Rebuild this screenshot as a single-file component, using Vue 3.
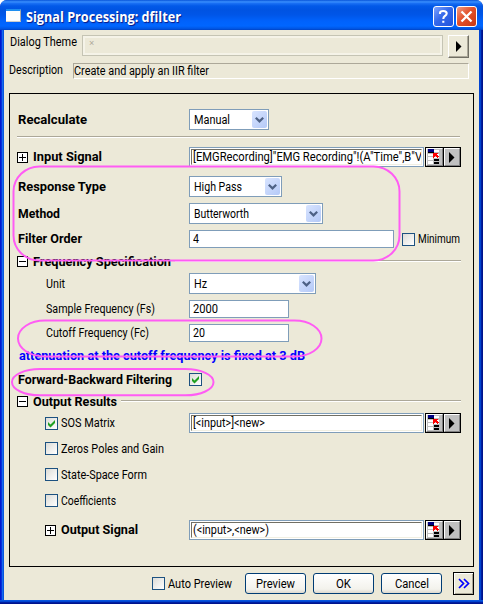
<script setup>
import { h } from 'vue'

// Condenses or widens a piece of text to the width the dialog font gives it.
const vFit = {
  mounted(el, { value }) {
    const natural = el.getBoundingClientRect().width
    el.style.transform = `scaleX(${value / natural})`
    el.style.marginRight = `${value - natural}px`
  },
}

const Arrow = () => h('svg', { width: 6, height: 11, viewBox: '0 0 6 11', class: 'arrow' }, [h('path', { d: 'M0 0v11l5.5-5.5z', fill: '#000' })])
const Chevron = () =>
  h('span', { class: 'drop' }, [
    h('svg', { width: 9, height: 6, viewBox: '0 0 9 6' }, [
      h('path', { d: 'M0.8 0.8L4.5 4.4L8.2 0.8', fill: 'none', stroke: '#4d6185', 'stroke-width': 2.2 }),
    ]),
  ])
const Box = (p) =>
  h('span', { class: 'check' }, p.on
    ? [h('svg', { width: 9, height: 9, viewBox: '0 0 9 9' }, [h('path', { d: 'M1 3v3l2.5 2.5L8 4V1L3.5 5.5z', fill: '#21a121' })])]
    : [])
Box.props = ['on']
const Toggle = (p) =>
  h('svg', { class: 'toggle', width: 11, height: 11, viewBox: '0 0 11 11', 'shape-rendering': 'crispEdges' }, [
    h('rect', { x: 0.5, y: 0.5, width: 10, height: 10, fill: '#fff', stroke: '#000' }),
    h('path', { d: p.open ? 'M2 5.5h7' : 'M2 5.5h7M5.5 2v7', stroke: '#000' }),
  ])
Toggle.props = ['open']
const Pickers = () =>
  h('span', { class: 'pickers' }, [
    h('span', { class: 'picker' }, [
      h('svg', { width: 13, height: 16, viewBox: '0 0 13 16', 'shape-rendering': 'crispEdges' }, [
        h('path', { d: 'M0 0h13v16H0z', fill: '#c0c0c0' }),
        h('path', { d: 'M6 1h5v2H6zM0 5h5v2H0zM6 5h5v2H6zM0 8h5v3H0zM6 8h5v1H6zM0 12h5v3H0z', fill: '#fff' }),
        h('path', { d: 'M0 0h6v3H0z', fill: '#000080' }),
        h('path', { d: 'M0 3h6v1H0zM6 10h5v2H6zM6 13h5v2H6z', fill: '#000' }),
        h('path', { d: 'M5 4h5v1H9v1h1v1h1v1h-1v1H9V8H8V7H7v1H6v1H5z', fill: '#f00' }),
      ]),
    ]),
    h('span', { class: 'picker' }, [h(Arrow)]),
  ])

const outputs = [
  { text: 'Zeros Poles and Gain', width: 103 },
  { text: 'State-Space Form', width: 86 },
  { text: 'Coefficients', width: 55 },
]
</script>

<template>
  <div class="window">
    <header class="title">
      <span class="app-icon"></span>
      <h1><span v-fit="155">Signal Processing: dfilter</span></h1>
      <span class="cap help"><svg width="19" height="19" viewBox="0 0 19 19"><path d="M6 7V5.8Q6.2 4 9.2 4Q12.7 4 12.7 6.6Q12.7 8 10.9 9Q9.3 10 9.3 12M9.3 13.7v2" fill="none" stroke="#fff" stroke-width="2.1" /></svg></span>
      <span class="cap close"><svg width="19" height="19" viewBox="0 0 19 19"><path d="M4.5 4.5l10 10M14.5 4.5l-10 10" fill="none" stroke="#fff" stroke-width="2.3" /></svg></span>
    </header>

    <main class="body">
      <div class="theme">
        <span class="top-label"><span v-fit="67">Dialog Theme</span></span>
        <div class="theme-field"><i>×</i></div>
        <button class="raised"><Arrow /></button>
      </div>
      <div class="desc">
        <span class="desc-label"><span v-fit="54">Description</span></span>
        <div class="desc-field"><span v-fit="135">Create and apply an IIR filter</span></div>
      </div>

      <section class="panel">
        <div class="row recalc">
          <b class="label"><span v-fit="69">Recalculate</span></b>
          <div class="select w80"><span v-fit="36">Manual</span><Chevron /></div>
        </div>
        <div class="rule"></div>
        <div class="row input-signal">
          <b class="label"><Toggle /><span v-fit="69">Input Signal</span></b>
          <div class="range"><div class="sunk"><span v-fit="229">[EMGRecording]"EMG Recording"!(A"Time",B"V</span></div></div>
          <Pickers />
        </div>
        <div class="row response">
          <b class="label"><span v-fit="88">Response Type</span></b>
          <div class="select w93"><span v-fit="48">High Pass</span><Chevron /></div>
        </div>
        <div class="row method">
          <b class="label"><span v-fit="42">Method</span></b>
          <div class="select w134"><span v-fit="55">Butterworth</span><Chevron /></div>
        </div>
        <div class="row order">
          <b class="label"><span v-fit="64">Filter Order</span></b>
          <div class="text w205"><span v-fit="6">4</span></div>
          <label class="minimum"><Box /><span v-fit="42">Minimum</span></label>
        </div>
        <div class="group freq">
          <Toggle :open="true" /><b><span v-fit="138">Frequency Specification</span></b><div class="rule"></div>
        </div>
        <div class="row unit">
          <span class="label sub"><span v-fit="19">Unit</span></span>
          <div class="select w127"><span v-fit="13">Hz</span><Chevron /></div>
        </div>
        <div class="row sample">
          <span class="label sub"><span v-fit="109">Sample Frequency (Fs)</span></span>
          <div class="text w100"><span v-fit="25">2000</span></div>
        </div>
        <div class="row cutoff">
          <span class="label sub"><span v-fit="103">Cutoff Frequency (Fc)</span></span>
          <div class="text w100"><span v-fit="12">20</span></div>
        </div>
        <p class="note"><span v-fit="286">attenuation at the cutoff frequency is fixed at 3 dB</span></p>
        <div class="row forward">
          <b class="label"><span v-fit="154">Forward-Backward Filtering</span></b>
          <Box :on="true" />
        </div>
        <div class="group results">
          <Toggle :open="true" /><b><span v-fit="84">Output Results</span></b><div class="rule"></div>
        </div>
        <div class="row sos">
          <label class="label sub"><Box :on="true" /><span v-fit="54">SOS Matrix</span></label>
          <div class="range"><div class="sunk"><span v-fit="72">[&lt;input>]&lt;new></span></div></div>
          <Pickers />
        </div>
        <label v-for="o in outputs" :key="o.text" class="option"><Box /><span v-fit="o.width">{{ o.text }}</span></label>
        <div class="row output-signal">
          <b class="label sub"><Toggle /><span v-fit="77">Output Signal</span></b>
          <div class="range"><div class="sunk"><span v-fit="76">(&lt;input>,&lt;new>)</span></div></div>
          <Pickers />
        </div>
      </section>

      <footer class="footer">
        <label class="auto"><Box /><span v-fit="64">Auto Preview</span></label>
        <button class="push"><span v-fit="39">Preview</span></button>
        <button class="push"><span v-fit="15">OK</span></button>
        <button class="push"><span v-fit="34">Cancel</span></button>
        <button class="more"><svg width="12" height="11" viewBox="0 0 12 11"><path d="M1 1l4.5 4.5L1 10M6 1l4.5 4.5L6 10" fill="none" stroke="#00f" stroke-width="1.7" /></svg></button>
      </footer>
    </main>

    <svg class="marks" width="483" height="604" viewBox="0 0 483 604">
      <g fill="none" stroke="#ff5cf4" stroke-width="2">
        <rect x="13.5" y="166.5" width="386" height="94" rx="26" ry="25" />
        <rect x="18" y="320.5" width="303.5" height="36" rx="27" ry="18" />
        <rect x="12" y="369" width="201.5" height="26.3" rx="28" ry="13" />
      </g>
    </svg>
  </div>
</template>

<style>
body { background: #fff; }
.window * { box-sizing: border-box; }
.window .drop { width: 15px; height: 17px; margin-left: auto; flex: none; display: flex; align-items: center; justify-content: center; border-radius: 2px; background: linear-gradient(135deg, #d8e4ff, #b4c9f7); }
.window .check { width: 13px; height: 13px; flex: none; display: flex; align-items: center; justify-content: center; border: 1px solid #1c5180; background: linear-gradient(135deg, #dcdcd7, #fff); }
.window .toggle { flex: none; }
.window .pickers { display: flex; margin-left: 1px; width: 36px; height: 20px; border: 1px solid #000; background: #000; gap: 1px; }
.window .picker { flex: 1; display: flex; align-items: center; justify-content: center; background: #c0c0c0; border: 1px solid; border-color: #fff #808080 #808080 #fff; }
</style>

<style scoped>
.window { position: relative; box-sizing: border-box; width: 483px; height: 604px; overflow: hidden; font: 12.5px/16px Roboto, "Liberation Sans", sans-serif; color: #000; background: linear-gradient(#0855dd 0 1px, #0144d0 1px 2px, #001ea0 2px 3px, #00138c 3px) 0 100% / 100% 4px no-repeat, linear-gradient(90deg, #0019cf 0 1px, #0831d9 1px 2px, #166aee 2px 3px, #0855dd 3px 479px, #0144d0 479px 481px, #001ea0 481px 482px, #00138c 482px); border-radius: 7px 7px 0 0; }
.window span { white-space: nowrap; }
.title { height: 30px; padding: 0 6px 0 6px; display: flex; align-items: center; background: linear-gradient(#0754d9 0, #3c92ff 2px, #1c72f5 3px, #0259e8 6px, #0053e2 10px, #0056e8 15px, #0062fc 21px, #0066ff 26px, #0053df 29px, #0040c0 30px); }
.app-icon { width: 15px; height: 13px; margin-top: 1px; background: #fdfdfd; border-top: 2px solid #1d8df0; border-bottom: 1px solid #ccc; border-right: 1px solid #aaa; }
h1 { margin: 4px 0 0 5px; font: bold 14.5px/18px "Open Sans", sans-serif; color: #fff; text-shadow: 1px 1px 1px #0a1883; }
h1 span, .label > span:not(.check), .top-label > span, .desc-label > span, .desc-field > span, .select > span:first-child, .sunk > span, .text > span, .group b > span, .note > span, .option > span:last-child, .minimum > span:last-child, .auto > span:last-child, .push > span { display: inline-block; flex: none; transform-origin: 0 50%; }
.cap { width: 21px; height: 21px; margin-top: 3px; border: 1px solid #fff; border-radius: 3px; display: flex; }
.help { margin-left: auto; background: linear-gradient(135deg, #7ea3ff, #3569ea 45%, #2053dc); }
.close { margin-left: 2px; background: linear-gradient(135deg, #f09b83, #e2512b 45%, #c83712); }
.body { margin: 0 4px; height: 570px; background: #ece9d8; padding: 5px 5px 0; }
.theme { height: 23px; display: flex; align-items: flex-start; }
.top-label { width: 73px; padding-left: 1px; margin-top: -1px; }
.theme-field { width: 361px; height: 21px; border: 1px solid #c5c4b4; padding: 0 6px; box-shadow: inset 0 0 0 2px #f5f3e8; }
.theme-field i { display: block; font: 9px/15px "Liberation Sans", sans-serif; color: #aca899; }
.raised { width: 21px; height: 23px; margin-left: 5px; padding: 0 0 0 1px; display: flex; align-items: center; justify-content: center; background: #ece9d8; border: 1px solid; border-color: #fff #716f64 #716f64 #fff; box-shadow: inset -1px -1px #aca899; }
.desc { margin-top: 5px; display: flex; height: 16px; }
.desc-label { width: 64px; margin-top: -1px; padding-left: 0; }
.desc-field { width: 396px; border: 1px solid; border-color: #aca899 #fff #fff #aca899; padding-left: 0; line-height: 14px; }
.panel { margin-top: 14px; width: 465px; height: 474px; border: 1px solid #000; padding: 15px 12px 0 7px; display: flex; flex-direction: column; }
.row { display: flex; align-items: center; height: 21px; flex: none; }
.label { width: 172px; flex: none; display: flex; align-items: center; gap: 5px; }
.label > span:first-child:not(.check) { margin-left: 0.6px; }
.sub { padding-left: 28px; }
.sub .check { margin-right: -2px; }
.rule { height: 2px; background: #aca899; border-bottom: 1px solid #fff; width: 443px; flex: none; }
.recalc + .rule { margin-top: 6px; }
.input-signal { margin-top: 9px; height: 20px; }
.response { margin-top: 9px; }
.method { margin-top: 6px; }
.order { margin-top: 6px; height: 18px; }
.freq { margin-top: 8px; }
.unit { margin-top: 6px; }
.sample { margin-top: 6px; height: 18px; }
.cutoff { margin-top: 6px; height: 18px; }
.note { margin: 6px 0 0 2px; height: 16px; color: #00f; font-weight: bold; }
.forward { margin-top: 9px; height: 13px; }
.results { margin-top: 10px; }
.sos { margin-top: 6px; height: 20px; }
.option { display: flex; align-items: center; gap: 3px; height: 13px; margin: 13px 0 0 28px; flex: none; }
.sos + .option { margin-top: 9px; }
.output-signal { margin-top: 13px; height: 20px; }
.group { display: flex; align-items: center; height: 11px; flex: none; }
.group b { margin-left: 5px; margin-right: 4px; }
.group .rule { width: auto; flex: 1; margin-top: -1px; }
.select { display: flex; align-items: center; height: 21px; border: 1px solid #7f9db9; background: #fff; padding: 0 1px 0 4px; }
.text { display: flex; align-items: center; height: 18px; border: 1px solid #7f9db9; background: #fff; padding-left: 3px; }
.w80 { width: 80px; } .w93 { width: 93px; } .w134 { width: 134px; } .w127 { width: 127px; } .w205 { width: 205px; } .w100 { width: 100px; }
.range { width: 235px; height: 20px; border: 1px solid #7f9db9; background: #fff; padding: 1px; }
.sunk { height: 16px; overflow: hidden; border: 1px solid; border-color: #716f64 #f1efe2 #f1efe2 #716f64; padding-left: 1px; line-height: 14px; }
.minimum { display: flex; align-items: center; gap: 3px; margin-left: 8px; }
.footer { margin-top: 5px; height: 23px; display: flex; align-items: center; }
.auto { width: 93px; margin-left: 143px; display: flex; align-items: center; gap: 3px; }
.push { width: 61px; height: 21px; margin-right: 7px; padding: 0; display: flex; align-items: center; justify-content: center; font: inherit; color: #000; border: 1px solid #003c74; border-radius: 3px; background: linear-gradient(#fff, #f3f2ec 80%, #dcd8ce); }
.more { width: 21px; height: 23px; margin-left: 4px; padding: 0; display: flex; align-items: center; justify-content: center; background: #ece9d8; border: 1px solid #000; box-shadow: inset 1px 1px #fff, inset -1px -1px #aca899; }
.marks { position: absolute; left: 0; top: 0; }
</style>
